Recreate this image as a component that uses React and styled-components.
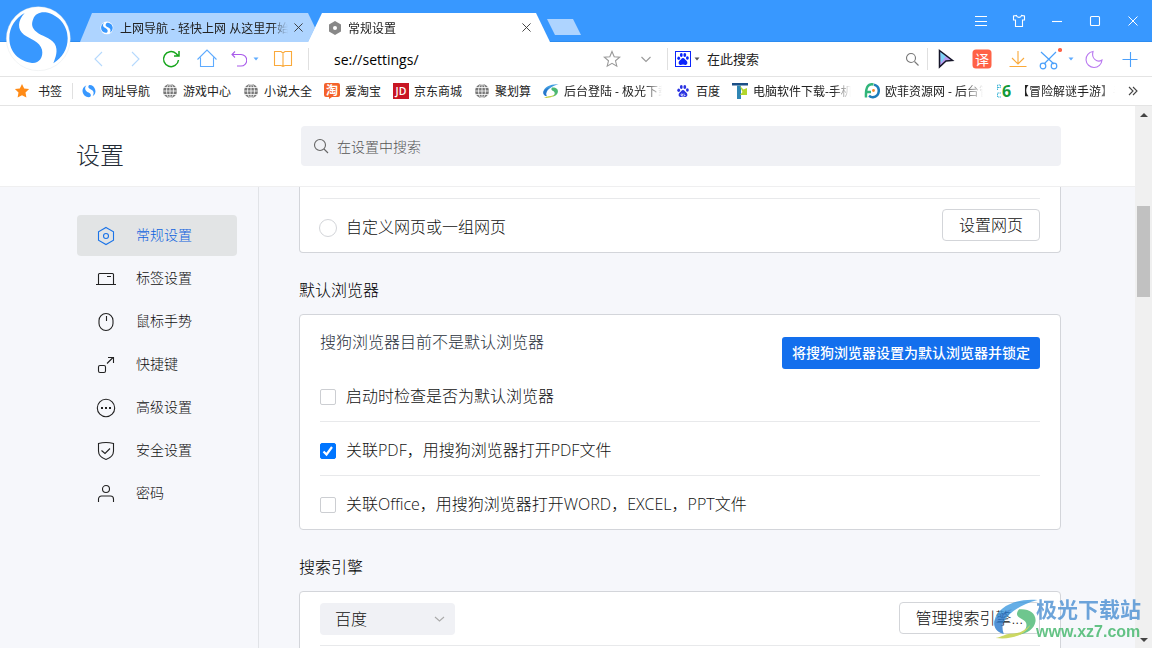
import React, { useState } from 'react';
import styled, { createGlobalStyle } from 'styled-components';

const GlobalStyle = createGlobalStyle`
  * {
    box-sizing: border-box;
  }

  body {
    margin: 0;
    overflow: hidden;
    font-family: 'Open Sans', 'Noto Sans CJK SC', sans-serif;
    color: #222;
  }

  button, input, select {
    margin: 0;
    padding: 0;
    border: 0;
    background: none;
    font: inherit;
    color: inherit;
    outline: none;
  }

  svg {
    display: block;
    flex-shrink: 0;
  }
`;

const Browser = styled.div`
  position: relative;
  display: flex;
  flex-direction: column;
  height: 100vh;
  overflow: hidden;
  background: #fff;
`;

const Logo = styled.div`
  position: absolute;
  top: 4px;
  left: 4px;
  z-index: 2;
`;

const TabBar = styled.header`
  display: flex;
  align-items: flex-end;
  height: 42px;
  padding-left: 80px;
  background: linear-gradient(#3898ff 41px, #2d8cf0 41px);
`;

const Tab = styled.div`
  display: flex;
  align-items: center;
  gap: 6px;
  height: 29px;
  width: 242px;
  padding: 0 19px 0 20px;
  margin-right: ${(p) => (p.$active ? '0' : '-14px')};
  font-size: 12px;
  background: ${(p) => (p.$active ? '#fff' : '#aed4ff')};
  clip-path: ${(p) =>
    p.$active
      ? 'polygon(14px 0, calc(100% - 14px) 0, 100% 100%, 0 100%)'
      : 'polygon(12px 0, calc(100% - 14px) 0, calc(100% - 7px) 50%, calc(100% - 14px) 100%, 0 100%)'};
`;

const TabTitle = styled.span`
  flex: 1;
  overflow: hidden;
  white-space: nowrap;
  mask-image: linear-gradient(to right, #000 90%, transparent);
`;

const TabClose = styled.button`
  display: flex;
`;

const NewTab = styled.button`
  width: 34px;
  height: 16px;
  margin: 0 auto 7px -3px;
  background: #aed4ff;
  clip-path: polygon(0 0, 26px 0, 34px 100%, 8px 100%);
`;

const WindowButton = styled.button`
  display: flex;
  align-items: center;
  justify-content: center;
  width: 38px;
  height: 42px;
`;

const AddressBar = styled.div`
  display: flex;
  align-items: center;
  height: 35px;
  padding: 0 4px 0 81px;
  border-bottom: 1px solid #e4e4e4;
`;

const ToolButton = styled.button`
  display: flex;
  align-items: center;
  justify-content: center;
  gap: 6px;
  width: ${(p) => (p.$wide ? '40px' : '36px')};
  height: 34px;
`;

const UrlTools = styled.div`
  display: flex;
  padding-right: 4px;

  button {
    width: 34px;
  }
`;

const Divider = styled.span`
  width: 1px;
  height: ${(p) => (p.$short ? '16px' : '22px')};
  margin: ${(p) => (p.$short ? '0 8px 0 10px' : '0')};
  background: #e0e0e0;
`;

const ReadButton = styled(ToolButton)`
  margin-right: 7px;
`;

const UrlInput = styled.input`
  flex: 1;
  min-width: 0;
  padding-left: 25px;
  font-size: 14px;
  color: #000;
`;

const SearchBox = styled.div`
  display: flex;
  align-items: center;
  width: 259px;
  padding: 0 8px 0 7px;
  gap: 3px;

  input {
    flex: 1;
    min-width: 0;
    padding-left: 4px;
    font-size: 13px;
  }

  input::placeholder {
    color: #222;
  }
`;

const Bookmarks = styled.nav`
  display: flex;
  align-items: center;
  height: 29px;
  padding: 0 14px;
  border-bottom: 1px solid #e4e4e4;
  font-size: 12px;
`;

const Bookmark = styled.a`
  display: flex;
  align-items: center;
  gap: 5px;
  margin-right: ${(p) => (p.$first ? '0' : '12px')};
  color: inherit;
  text-decoration: none;
  white-space: nowrap;

  span {
    max-width: 99px;
    overflow: hidden;
    mask-image: ${(p) => (p.$fade ? 'linear-gradient(to right, #000 80px, transparent 98px)' : 'none')};
  }
`;

const MoreButton = styled.button`
  margin-left: auto;
`;

const Viewport = styled.div`
  display: flex;
  flex: 1;
  min-height: 0;
`;

const Page = styled.div`
  display: flex;
  flex-direction: column;
  flex: 1;
  min-width: 0;
  background: #f6f7fb;
  font-weight: 300;
  color: #111;
`;

const PageHeader = styled.div`
  display: flex;
  flex-shrink: 0;
  height: 81px;
  padding: 20px 74px 0 76px;
  background: #fff;
  border-bottom: 1px solid #efeff0;
`;

const Title = styled.h1`
  width: 225px;
  margin: 0;
  padding-top: 11px;
  font-size: 24px;
  line-height: 36px;
  font-weight: 300;
  color: #222a35;
`;

const SettingsSearch = styled.label`
  display: flex;
  align-items: center;
  flex: 1;
  gap: 8px;
  height: 40px;
  padding: 0 12px;
  border-radius: 4px;
  background: #f0f1f5;

  input {
    flex: 1;
    font-size: 14px;
  }

  input::placeholder {
    color: #555;
  }
`;

const Columns = styled.div`
  display: flex;
  flex: 1;
  min-height: 0;
  overflow: hidden;
`;

const Sidebar = styled.nav`
  display: flex;
  flex-direction: column;
  gap: 2px;
  width: 259px;
  padding: 28px 21px 0 77px;
  border-right: 1px solid #e1e3e7;
`;

const SideLink = styled.a`
  display: flex;
  align-items: center;
  gap: 20px;
  height: 41px;
  padding-left: 19px;
  border-radius: 4px;
  font-size: 14px;
  text-decoration: none;
  color: ${(p) => (p.$active ? '#0f62de' : '#111')};
  background: ${(p) => (p.$active ? '#e2e4e5' : 'transparent')};

  span {
    padding-bottom: 3px;
  }
`;

const Main = styled.main`
  flex: 1;
  padding: 0 74px 0 40px;
`;

const Card = styled.section`
  padding: 0 20px;
  background: #fff;
  border: 1px solid #d3d5da;
  border-radius: 4px;
  ${(p) => p.$cut && 'border-top: 0; border-top-left-radius: 0; border-top-right-radius: 0; padding-top: 11px;'}
  ${(p) => p.$open && 'padding-bottom: 54px;'}
`;

const SectionTitle = styled.h2`
  margin: 0;
  padding: 25px 0 12px;
  font-size: 16px;
  line-height: 24px;
  font-weight: 300;
  color: #000;
`;

const Row = styled.div`
  display: flex;
  align-items: center;
  justify-content: space-between;
  height: ${(p) => (p.$topLine ? '55px' : '54px')};
  border-bottom: 1px solid ${(p) => (p.$last ? 'transparent' : '#e8e9eb')};
  margin-bottom: ${(p) => (p.$last ? '-1px' : '0')};
  border-top: ${(p) => (p.$topLine ? '1px solid #e8e9eb' : '0')};
  font-size: 16px;
`;

const StatusRow = styled.div`
  display: flex;
  justify-content: space-between;
  height: 53px;
  font-size: 16px;
  line-height: 54px;
  color: #2a323d;
`;

const Option = styled.label`
  display: flex;
  align-items: center;
  gap: 10px;
  padding-top: 4px;

  span {
    padding-bottom: 3px;
  }
`;

const Checkbox = styled.input`
  appearance: none;
  width: 16px;
  height: 16px;
  border: 1px solid #ccced2;
  border-radius: 2px;
  background: #fff;

  &:checked {
    border-color: #0075ff;
    background: #0075ff
      url("data:image/svg+xml,%3Csvg xmlns='http://www.w3.org/2000/svg' viewBox='0 0 14 14'%3E%3Cpath d='M2.5 7.5l3 3L11 3' fill='none' stroke='white' stroke-width='2.2'/%3E%3C/svg%3E");
  }
`;

const Radio = styled.input`
  appearance: none;
  width: 18px;
  height: 18px;
  margin: 0 -1px;
  border: 1px solid #d3d5d9;
  border-radius: 50%;
  background: #fff;
`;

const OutlineButton = styled.button`
  height: 32px;
  margin-bottom: 2px;
  padding: 0 16px;
  border: 1px solid #d3d5d9;
  border-radius: 4px;
  background: #fff;
  line-height: 30px;
`;

const PrimaryButton = styled.button`
  height: 32px;
  margin-top: 22px;
  padding: 0 10px;
  border-radius: 3px;
  background: #136fed;
  font-size: 14px;
  line-height: 32px;
  font-weight: 500;
  color: #fff;
`;

const SelectWrap = styled.div`
  display: flex;
  align-items: center;
  width: 135px;
  height: 32px;
  padding-right: 10px;
  border-radius: 4px;
  background: #f0f1f5;

  select {
    appearance: none;
    flex: 1;
    height: 32px;
    padding-left: 15px;
  }
`;

const Scrollbar = styled.div`
  display: flex;
  flex-direction: column;
  align-items: center;
  width: 17px;
  background: #f0f0f0;
`;

const ScrollArrow = styled.div`
  display: flex;
  align-items: center;
  justify-content: center;
  height: 17px;
`;

const ScrollSpace = styled.div`
  flex: ${(p) => p.$grow};
`;

const ScrollThumb = styled.div`
  flex: 91;
  width: 13px;
  background: #c1c1c1;
`;

const Watermark = styled.div`
  position: absolute;
  right: 11px;
  bottom: 6px;
  display: flex;
  align-items: center;
  pointer-events: none;
  opacity: 0.8;
`;

const WatermarkText = styled.div`
  display: flex;
  flex-direction: column;
  margin-left: -4px;
  font-weight: 700;
  font-size: 21px;
  line-height: 26px;
  color: #4a8fd2;

  span {
    font-family: 'Liberation Sans', sans-serif;
    font-size: 16px;
    line-height: 20px;
    color: #3fb568;
  }
`;

const SogouMark = ({ size, ring = '#fff', fill = '#3898ff' }) => (
  <svg width={size} height={size} viewBox="0 0 210 210">
    <circle cx="103" cy="104" r="96" fill={ring} stroke="#d9dde2" strokeWidth="1" />
    <path fill={fill} d="M62 27C40 50 40 77 60 92C78 105 108 112 114 137C119 160 104 179 84 177C45 172 16 145 16 103C16 68 35 42 62 27Z" />
    <path fill={fill} d="M88 44C93 30 108 23 125 25C165 33 191 65 191 103C191 135 175 162 148 178C154 160 164 140 152 119C138 99 112 97 98 84C82 71 82 58 88 44Z" />
  </svg>
);

const SogouSmall = () => (
  <svg width="16" height="16" viewBox="0 0 16 16" fill="#3898ff">
    <path d="M5.5 2.2C2.5 3.5 1 6 1.6 9c.6 3 3 5 6 5.2 2 0 2.8-1.6 2-3C8.600 9.500 5 9 4.300 6.500 3.900 5 4.300 3.500 5.500 2.200z" />
    <path d="M8.300 2c-1.300.8-1.300 2.600 0 3.500 1.500 1 3.700 1.500 4.200 3.600.3 1.400-.1 2.800-.8 3.900 2.200-1.200 3.200-3.500 2.600-6C13.600 3.800 11 1.800 8.300 2z" />
  </svg>
);

const Globe = () => (
  <svg width="16" height="16" viewBox="0 0 16 16" fill="none">
    <circle cx="8" cy="8" r="7" fill="#777" />
    <path d="M8 1v14M1 8h14M2 4.500h12M2 11.500h12" stroke="#fff" strokeWidth=".8" />
    <ellipse cx="8" cy="8" rx="3.500" ry="7" stroke="#fff" strokeWidth=".8" />
  </svg>
);

const Paw = ({ boxed }) => (
  <svg width="16" height="16" viewBox="0 0 16 16" fill={boxed ? '#0b24fb' : '#2932e1'}>
    {boxed && <rect x=".5" y=".5" width="15" height="15" fill="#fff" stroke="#0b24fb" />}
    <ellipse cx="3.700" cy="7.200" rx="1.400" ry="1.800" />
    <ellipse cx="6.300" cy="4" rx="1.400" ry="1.900" />
    <ellipse cx="9.800" cy="4" rx="1.400" ry="1.900" />
    <ellipse cx="12.400" cy="7" rx="1.400" ry="1.800" />
    <path d="M8 7c-1.500 0-2 1.500-3.200 2.600C3.400 10.800 3 13.500 5.200 13.900c1 .2 1.800-.3 2.800-.3s1.900.5 2.900.3c2.200-.5 1.700-3.100.3-4.300C10 8.500 9.500 7 8 7z" />
    {!boxed && <path d="M6 11h1.500v1.500H6zM9 10.500v2h1.500" fill="none" stroke="#fff" strokeWidth=".7" />}
  </svg>
);

const Taobao = () => (
  <svg width="16" height="16" viewBox="0 0 16 16">
    <path d="M2 0h12a2 2 0 0 1 2 2v10a2 2 0 0 1-2 2H8l-3 2v-2H2a2 2 0 0 1-2-2V2a2 2 0 0 1 2-2z" fill="#f4622a" />
    <text x="8" y="11.500" fontSize="12" fontWeight="700" textAnchor="middle" fill="#fff">淘</text>
  </svg>
);

const Jd = () => (
  <svg width="16" height="16" viewBox="0 0 16 16">
    <rect width="16" height="16" fill="#c81623" />
    <text x="8" y="12" fontSize="10.500" fontWeight="600" textAnchor="middle" fill="#fff">JD</text>
  </svg>
);

const Swirl = ({ width = 16, height = 16 }) => (
  <svg width={width} height={height} viewBox="2 1 44 39">
    <path d="M45 2C26 0 6 8 3 22c-1 6 3 11 9 13-3-5-2-9 1-13C18 13 30 6 45 2z" fill="#3f9be0" />
    <path d="M20 11C12 17 9 26 12 35 5 33 2 29 3 23 5 17 12 13 20 11z" fill="#2878cc" />
    <path d="M27 11c10-1 17 4 16 12-1 7-8 12-17 13 6-3 9-7 8-11-1-6-14-5-7-14z" fill="#4bb873" />
    <path d="M4 39c7-1 10-4 14-4 8 0 15-3 20-9C33 36 20 41 4 39z" fill="#c0cf3d" />
  </svg>
);

const TArrow = () => (
  <svg width="16" height="16" viewBox="0 0 16 16">
    <path d="M0 0h16v2.500H0z" fill="#1c4f86" />
    <path d="M5 2.500h4V16H5z" fill="#2f86b4" />
    <path d="M7.500 2.500l4 4L15 5v7H8l2.500-3z" fill="#b2d62c" />
  </svg>
);

const RingF = () => (
  <svg width="16" height="16" viewBox="0 0 16 16" fill="none" strokeWidth="2.500">
    <path d="M9.500 1.500C4 .5 1.500 4 2 14.500M2 9h5" stroke="#31b57a" />
    <path d="M10 1.600c7 2 6 12-1 12.700-2 .1-3-.6-4-1.500" stroke="#1d7dba" />
    <circle cx="9.500" cy="7.500" r="1.400" fill="#f58a2b" />
  </svg>
);

// "PC6" mark: small dotted letters left of the digit
const PcSix = () => (
  <svg width="16" height="16" viewBox="0 0 16 16">
    <path d="M1.500 7V2h3v2.500h-3M5 10H1.500v4H5" fill="none" stroke="#46b9d8" strokeDasharray="1.500 .5" />
    <text x="6" y="14" fontSize="16" fontWeight="700" fill="#149a38">6</text>
  </svg>
);

const Caret = ({ color }) => (
  <svg width="6" height="4" viewBox="0 0 6 4"><path d="M.5.5h5L3 3.500z" fill={color} /></svg>
);

const Cross = ({ size, color }) => (
  <svg width={size} height={size} viewBox="0 0 10 10" stroke={color}><path d="M.5.5l9 9M9.500.5l-9 9" /></svg>
);

// thin outline icon on an even grid
const Line = ({ size = 20, color = '#222', children }) => (
  <svg width={size} height={size} viewBox={`0 0 ${size} ${size}`} fill="none" stroke={color} strokeWidth="1.100">
    {children}
  </svg>
);

const Magnifier = () => (
  <Line size={16} color="#666"><circle cx="7" cy="7" r="5.500" /><path d="M11 11l4 4" /></Line>
);

const ChevronDown = () => (
  <Line size={12} color="#aaa"><path d="M2 4l4.500 4L11 4" /></Line>
);

const bookmarks = [
  { name: '网址导航', icon: <SogouSmall /> },
  { name: '游戏中心', icon: <Globe /> },
  { name: '小说大全', icon: <Globe /> },
  { name: '爱淘宝', icon: <Taobao /> },
  { name: '京东商城', icon: <Jd /> },
  { name: '聚划算', icon: <Globe /> },
  { name: '后台登陆 - 极光下载站', icon: <Swirl />, fade: true },
  { name: '百度', icon: <Paw /> },
  { name: '电脑软件下载-手机软件', icon: <TArrow />, fade: true },
  { name: '欧菲资源网 - 后台管理', icon: <RingF />, fade: true },
  { name: '【冒险解谜手游】手机', icon: <PcSix />, fade: true },
];

const menu = [
  {
    name: '常规设置',
    icon: <><path d="M10 1.500l7.500 4.200v8.600L10 18.500l-7.500-4.200V5.700z" /><circle cx="10" cy="10" r="2.500" /></>,
  },
  {
    name: '标签设置',
    icon: <path d="M0 15.500h20M2.500 15.500V5.500a1 1 0 0 1 1-1h13a1 1 0 0 1 1 1v10M11 7.500h4" />,
  },
  {
    name: '鼠标手势',
    icon: <><rect x="3" y="1.500" width="14" height="17" rx="7" /><path d="M10.500 4v5" /></>,
  },
  {
    name: '快捷键',
    icon: <><rect x="2.500" y="10.500" width="7" height="7" rx="1.500" /><path d="M11 8.500l6-6M12 2.500h5.500V8" /></>,
  },
  {
    name: '高级设置',
    icon: <><circle cx="10" cy="10" r="8.700" /><path d="M5 10h2M9 10h2M13 10h2" strokeWidth="2" /></>,
  },
  {
    name: '安全设置',
    icon: <><path d="M10 1.500c2.500 0 5 .3 7.500 1v7.500c0 4-3 7-7.500 8.500-4.500-1.500-7.500-4.500-7.500-8.500V2.500c2.500-.7 5-1 7.500-1z" /><path d="M5.500 9.500l3.500 3 5-5" /></>,
  },
  {
    name: '密码',
    icon: <><circle cx="10" cy="5" r="3.500" /><path d="M2.500 18v-3a3 3 0 0 1 3-3h9a3 3 0 0 1 3 3v3" /></>,
  },
];

function TopTabs() {
  return (
    <TabBar>
      <Tab>
        <SogouMark size={14} />
        <TabTitle>上网导航 - 轻快上网 从这里开始</TabTitle>
        <TabClose aria-label="关闭"><Cross size={9} color="#333" /></TabClose>
      </Tab>
      <Tab $active>
        <svg width="14" height="14" viewBox="0 0 14 14">
          <path d="M7 0l6 3.500v7L7 14l-6-3.500v-7z" fill="#888" />
          <circle cx="7" cy="7" r="2" fill="#fff" />
        </svg>
        <TabTitle>常规设置</TabTitle>
        <TabClose aria-label="关闭"><Cross size={9} color="#333" /></TabClose>
      </Tab>
      <NewTab aria-label="新标签" />
      <WindowButton aria-label="菜单">
        <Line size={14} color="#fff"><path d="M1 2.500h12M1 7.500h12M1 11.500h12" /></Line>
      </WindowButton>
      <WindowButton aria-label="皮肤">
        <Line size={14} color="#fff"><path d="M4.500 1.500L1.500 2v4h2v6.500h7V6h2V2l-3-.5C9 4 5 4 4.500 1.500z" /></Line>
      </WindowButton>
      <WindowButton aria-label="最小化">
        <Line size={12} color="#fff"><path d="M1 6.500h10" /></Line>
      </WindowButton>
      <WindowButton aria-label="最大化">
        <Line size={12} color="#fff"><rect x="1.500" y="1.500" width="9" height="9" rx="1" /></Line>
      </WindowButton>
      <WindowButton aria-label="关闭窗口"><Cross size={10} color="#fff" /></WindowButton>
    </TabBar>
  );
}

function Toolbar() {
  return (
    <AddressBar>
      <ToolButton aria-label="后退"><Line color="#b5d9fd"><path d="M13 3l-7 7 7 7" /></Line></ToolButton>
      <ToolButton aria-label="前进"><Line color="#b5d9fd"><path d="M7 3l7 7-7 7" /></Line></ToolButton>
      <ToolButton aria-label="刷新">
        <Line color="#16a51c"><path d="M17.500 11a7.500 7.500 0 1 1-2.500-6.500L17 6.500M18 2v5h-5" strokeWidth="1.500" /></Line>
      </ToolButton>
      <ToolButton aria-label="主页">
        <Line color="#5eabff"><path d="M.5 10.500L10 1l9.500 9.500M3.500 8.500v9h13v-9" /></Line>
      </ToolButton>
      <ToolButton $wide aria-label="恢复">
        <Line size={16} color="#a95bea"><path d="M4 .5l-3 3 3 3M1 3.500h9a5.500 5.500 0 0 1 0 11.500H6" /></Line>
        <Caret color="#5eabff" />
      </ToolButton>
      <ReadButton aria-label="阅读">
        <Line color="#faa93a"><path d="M1.500 2.500h6.500l2 1.500 2-1.500h6.500v14H12l-2 1-2-1H1.500zM10 4v13" /></Line>
      </ReadButton>
      <Divider />
      <UrlInput aria-label="地址" defaultValue="se://settings/" />
      <UrlTools>
        <ToolButton aria-label="收藏">
          <Line size={18} color="#999"><path d="M9 1.500l2.200 5.200 5.500.5-4.200 3.600 1.300 5.400L9 13.300l-4.800 2.900 1.300-5.400L1.300 7.200l5.500-.5z" /></Line>
        </ToolButton>
        <ToolButton aria-label="历史"><Line size={12} color="#999"><path d="M1.500 4L6 8.500 10.500 4" /></Line></ToolButton>
      </UrlTools>
      <Divider />
      <SearchBox>
        <Paw boxed />
        <Caret color="#555" />
        <input aria-label="搜索" placeholder="在此搜索" />
        <Line size={14} color="#777"><circle cx="6" cy="6" r="4.500" /><path d="M9.500 9.500l4 4" /></Line>
      </SearchBox>
      <Divider />
      <ToolButton aria-label="手势">
        <svg width="18" height="20" viewBox="0 0 18 20">
          <path d="M3 2l12 9-6 1-6 6z" fill="#b69cf0" />
          <path d="M3 2l6 5-5 7z" fill="#7fd3f5" />
          <path d="M2.500 1.500l13 10-6.500.5-6.500 6z" fill="none" stroke="#151528" strokeWidth="1.500" />
        </svg>
      </ToolButton>
      <ToolButton aria-label="翻译">
        <svg width="20" height="20" viewBox="0 0 20 20">
          <rect x=".5" y=".5" width="19" height="19" rx="3.500" fill="#ff6247" />
          <text x="10" y="15.500" fontSize="14" textAnchor="middle" fill="#fff">译</text>
        </svg>
      </ToolButton>
      <ToolButton aria-label="下载">
        <Line size={18} color="#faa93a"><path d="M9 1v12M3 8l6 6 6-6M.5 16.500h17" /></Line>
      </ToolButton>
      <ToolButton $wide aria-label="截图">
        <svg width="24" height="24" viewBox="0 0 24 24" fill="none" stroke="#4ba0fb" strokeWidth="1.200">
          <path d="M3 5l13 12M18 5L6 17" />
          <circle cx="5" cy="19" r="2.800" />
          <circle cx="16" cy="19" r="2.800" />
          <circle cx="22" cy="3" r="1.500" fill="#ff6247" stroke="#ff6247" />
        </svg>
        <Caret color="#5eabff" />
      </ToolButton>
      <ToolButton aria-label="夜间">
        <Line size={18} color="#b978f0"><path d="M8 1.500A8 8 0 1 0 17 10C12.500 13 6 9 8 1.500z" /></Line>
      </ToolButton>
      <ToolButton aria-label="添加">
        <Line size={16} color="#4ba0fb"><path d="M.5 8.500h15M8.500 1v15" /></Line>
      </ToolButton>
    </AddressBar>
  );
}

function BookmarkBar() {
  return (
    <Bookmarks>
      <Bookmark href="#" $first>
        <svg width="16" height="16" viewBox="0 0 16 16">
          <path d="M8 1l2.200 4.500 4.900.6-3.600 3.500.9 4.900L8 12.200l-4.400 2.300.9-4.900L.9 6.100l4.900-.6z" fill="#ff8b17" />
        </svg>
        <span>&nbsp;书签</span>
      </Bookmark>
      <Divider $short />
      {bookmarks.map((item) => (
        <Bookmark key={item.name} href="#" $fade={item.fade}>
          {item.icon}
          <span>{item.name}</span>
        </Bookmark>
      ))}
      <MoreButton aria-label="更多">
        <Line size={10} color="#444"><path d="M1 1l4 4-4 4M5 1l4 4-4 4" /></Line>
      </MoreButton>
    </Bookmarks>
  );
}

function Settings() {
  const [options, setOptions] = useState({ check: false, pdf: true, office: false });

  const toggle = (key) => setOptions({ ...options, [key]: !options[key] });

  return (
    <Main>
      <Card $cut>
        <Row $topLine $last>
          <Option>
            <Radio type="radio" name="homepage" />
            <span>自定义网页或一组网页</span>
          </Option>
          <OutlineButton>设置网页</OutlineButton>
        </Row>
      </Card>

      <SectionTitle>默认浏览器</SectionTitle>
      <Card>
        <StatusRow>
          搜狗浏览器目前不是默认浏览器
          <PrimaryButton>将搜狗浏览器设置为默认浏览器并锁定</PrimaryButton>
        </StatusRow>
        <Row>
          <Option>
            <Checkbox type="checkbox" checked={options.check} onChange={() => toggle('check')} />
            <span>启动时检查是否为默认浏览器</span>
          </Option>
        </Row>
        <Row>
          <Option>
            <Checkbox type="checkbox" checked={options.pdf} onChange={() => toggle('pdf')} />
            <span>关联PDF，用搜狗浏览器打开PDF文件</span>
          </Option>
        </Row>
        <Row $last>
          <Option>
            <Checkbox type="checkbox" checked={options.office} onChange={() => toggle('office')} />
            <span>关联Office，用搜狗浏览器打开WORD，EXCEL，PPT文件</span>
          </Option>
        </Row>
      </Card>

      <SectionTitle>搜索引擎</SectionTitle>
      <Card $open>
        <Row>
          <SelectWrap>
            <select aria-label="搜索引擎" defaultValue="baidu">
              <option value="baidu">百度</option>
              <option value="sogou">搜狗</option>
            </select>
            <ChevronDown />
          </SelectWrap>
          <OutlineButton>管理搜索引擎...</OutlineButton>
        </Row>
      </Card>
    </Main>
  );
}

function App() {
  return (
    <Browser>
      <GlobalStyle />
      <Logo><SogouMark size={70} /></Logo>
      <TopTabs />
      <Toolbar />
      <BookmarkBar />
      <Viewport>
        <Page>
          <PageHeader>
            <Title>设置</Title>
            <SettingsSearch>
              <Magnifier />
              <input aria-label="在设置中搜索" placeholder="在设置中搜索" />
            </SettingsSearch>
          </PageHeader>
          <Columns>
            <Sidebar>
              {menu.map((item, i) => (
                <SideLink key={item.name} href="#" $active={i === 0}>
                  <Line color={i === 0 ? '#1a73e8' : '#222'}>{item.icon}</Line>
                  <span>{item.name}</span>
                </SideLink>
              ))}
            </Sidebar>
            <Settings />
          </Columns>
        </Page>
        <Scrollbar>
          <ScrollArrow>
            <svg width="8" height="4" viewBox="0 0 8 4"><path d="M0 4l4-4 4 4z" fill="#444" /></svg>
          </ScrollArrow>
          <ScrollSpace $grow={83} />
          <ScrollThumb />
          <ScrollSpace $grow={334} />
          <ScrollArrow>
            <svg width="8" height="4" viewBox="0 0 8 4"><path d="M0 0l4 4 4-4z" fill="#444" /></svg>
          </ScrollArrow>
        </Scrollbar>
      </Viewport>
      <Watermark>
        <Swirl width={48} height={40} />
        <WatermarkText>
          极光下载站
          <span>www.xz7.com</span>
        </WatermarkText>
      </Watermark>
    </Browser>
  );
}

export default App;
